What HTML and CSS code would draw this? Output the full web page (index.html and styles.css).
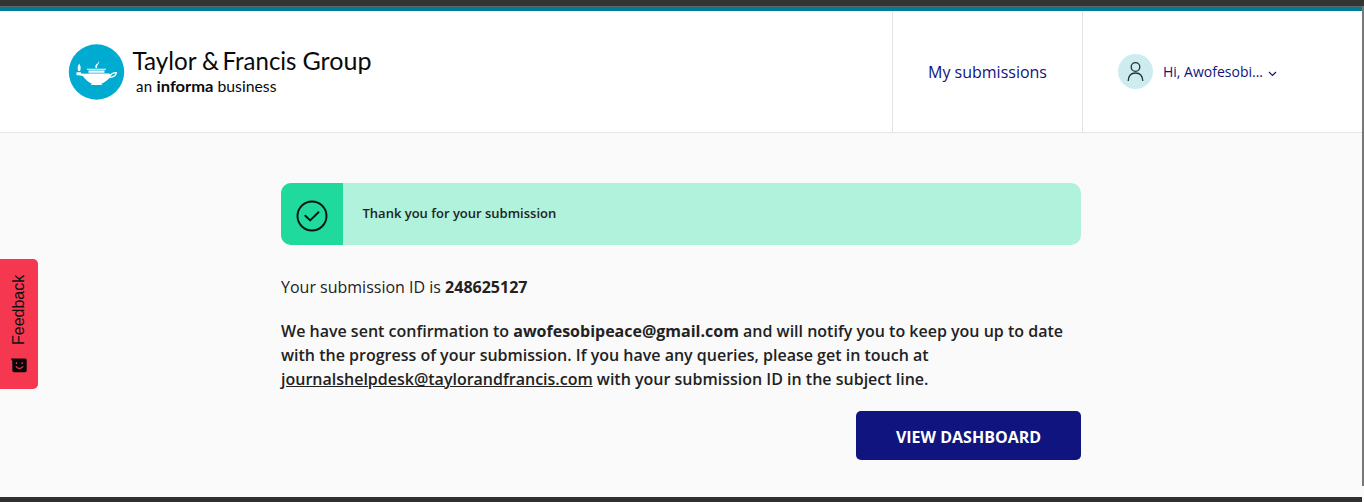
FILE: index.html
```html
<!DOCTYPE html>
<html lang="en">
<head>
<meta charset="utf-8">
<title>Submission received</title>
<link rel="stylesheet" href="styles.css">
</head>
<body>
<div class="window">
  <div class="page">
    <header class="header">
      <a class="brand">
        <svg width="310" height="60" viewBox="0 0 310 60">
          <circle cx="27.500" cy="30" r="27.700" fill="#00abd1"/>
          <g fill="#fff">
            <path d="M7.500 30.300h4.500v1.200l3 .3c8-.4 17-.4 24-.2 1.500 0 2.500.6 3.300 1.500-.5 1.500-1.200 2.400-2.300 3.300-3 3-6 4.800-8 5.300l1.500 1.300H21.500l1.500-1.300c-3.500-1.200-6.500-3.800-9-7.400-1.300-1-3.500-1-6.500-1z"/>
            <path d="M18 26.700h19v1H18zM19.500 28.600h16v2.200h-16z"/>
            <path d="M10.200 21.500c1.900 3.300 1.800 5 .8 7.500H9.300c-1-2.500-1-4.200.9-7.500z"/>
            <path d="M30 19c.8 3-2.600 3.500-1.800 7h-1.500c-1.600-4 2.600-3.600 3.300-7z"/>
          </g>
          <path fill="none" stroke="#fff" stroke-width="1.300" d="M40.500 35.300c4 .2 6.300-1.800 6.900-4.600-2.500-.3-4.700.7-6.400 2.800"/>
          <g class="brand-name">
            <text x="63.500" y="28" textLength="64" lengthAdjust="spacingAndGlyphs">Taylor</text>
            <text x="133" y="28" textLength="17" lengthAdjust="spacingAndGlyphs">&amp;</text>
            <text x="153.500" y="28" textLength="74" lengthAdjust="spacingAndGlyphs">Francis</text>
            <text x="233.500" y="28" textLength="69" lengthAdjust="spacingAndGlyphs">Group</text>
          </g>
          <g class="brand-tag">
            <text x="67" y="50" textLength="16">an</text>
            <text x="87.500" y="50" font-weight="700" textLength="57" lengthAdjust="spacingAndGlyphs">informa</text>
            <text x="148.500" y="50" textLength="59" lengthAdjust="spacingAndGlyphs">business</text>
          </g>
        </svg>
      </a>
      <a class="nav">My submissions</a>
      <div class="user">
        <span class="avatar">
          <svg width="18" height="22" viewBox="0 0 18 22" fill="none" stroke="#20343a" stroke-width="1.300"><circle cx="8.500" cy="6" r="4.300"/><path d="M1.200 20c.2-4.900 3-8 7.300-8s7.100 3.100 7.300 8"/></svg>
        </span>
        <span class="hello">Hi, Awofesobi...</span>
        <svg class="chevron" width="9" height="6" viewBox="0 0 9 6" fill="none" stroke="#10147e" stroke-width="1.200"><path d="M1 1l3.500 3.500L8 1"/></svg>
      </div>
    </header>
    <main class="main">
      <div class="alert">
        <div class="alert-icon">
          <svg width="32" height="32" viewBox="0 0 32 32" fill="none" stroke="#07140f" stroke-width="1.900" stroke-linecap="round" stroke-linejoin="round"><circle cx="16" cy="16" r="14.500"/><path d="M9.300 15.700l4.900 4.700 8.300-8.200"/></svg>
        </div>
        <div class="alert-text">Thank you for your submission</div>
      </div>
      <p class="id-line">Your submission ID is <b>248625127</b></p>
      <p class="message">We have sent confirmation to <b>awofesobipeace@gmail.com</b> and will notify you to keep you up to date<br>with the progress of your submission. If you have any queries, please get in touch at<br><a class="mail">journalshelpdesk@taylorandfrancis.com</a> with your submission ID in the subject line.</p>
      <div class="actions"><button class="button">VIEW DASHBOARD</button></div>
    </main>
  </div>
  <div class="edge"></div>
</div>
<div class="feedback">
  <span class="feedback-label">Feedback</span>
  <svg class="smile" width="16" height="15" viewBox="0 0 16 15"><path d="M0 .3l3 .1h11q1.700 0 1.700 1.700v10.300q0 1.800-1.700 1.800H3q-1.700 0-1.700-1.800V3.500z" fill="#080808"/><path d="M4.800 8.300q3.500 4.300 7.400 0M5.500 4.200v1.700M11.200 4.200v1.700" fill="none" stroke="#f5384f" stroke-width="1.200"/></svg>
</div>
</body>
</html>
```
FILE: styles.css
```css
* { box-sizing: border-box; }
body {
  margin: 0;
  height: 502px;
  overflow: hidden;
  background: #fafafa;
  color: #222;
  font-family: "Open Sans", sans-serif;
  font-size: 16px;
}
b { font-weight: 700; }
.window {
  display: flex;
  height: 502px;
  border-top: 6px solid #343434;
}
.page {
  width: 1362px;
  border-top: 1px solid #59666a;
  border-bottom: 5px solid #303030;
}
.edge { width: 2px; height: 480px; background: #777; }
.header {
  display: flex;
  height: 126px;
  border-top: 4px solid #007b97;
  border-bottom: 1px solid #e5e5e5;
  background: #fff;
}
.brand { width: 892px; padding: 31px 0 0 69px; }
.brand svg { display: block; overflow: visible; }
.brand-name { font: 25px Lato, sans-serif; fill: #0a0a0a; }
.brand-tag { font: 15px Lato, sans-serif; fill: #0a0a0a; }
.nav {
  display: flex;
  align-items: center;
  justify-content: center;
  width: 191px;
  border: solid #e3e3e3;
  border-width: 0 1px;
  color: #10147e;
}
.user {
  display: flex;
  align-items: center;
  padding-left: 35px;
  color: #10147e;
  font-size: 14px;
}
.avatar {
  display: flex;
  align-items: center;
  justify-content: center;
  width: 35px;
  height: 35px;
  margin-right: 10px;
  border-radius: 50%;
  background: #cdecef;
}
.chevron { margin: 4px 0 0 5px; }
.main { width: 800px; margin: 50px 0 0 281px; }
.alert {
  display: flex;
  height: 62px;
  overflow: hidden;
  border-radius: 10px;
  background: #b0f2dc;
}
.alert-icon {
  display: flex;
  align-items: center;
  justify-content: center;
  width: 62px;
  padding-top: 4px;
  background: #1fd99d;
}
.alert-text {
  padding: 18px 0 0 19.500px;
  font-size: 13px;
  font-weight: 600;
  line-height: 24px;
}
.id-line { margin: 30px 0 20px; line-height: 24px; }
.message {
  margin: 0;
  font-weight: 600;
  line-height: 24px;
  white-space: nowrap;
}
.mail { text-decoration: underline; }
.actions { display: flex; justify-content: flex-end; margin-top: 20px; }
.button {
  width: 225px;
  height: 49px;
  padding: 3px 0 0;
  border: 0;
  border-radius: 5px;
  background: #10147e;
  color: #fff;
  font: 700 16px "Open Sans", sans-serif;
}
.feedback {
  position: absolute;
  top: 259px;
  left: 0;
  display: flex;
  flex-direction: column;
  align-items: center;
  width: 38px;
  height: 130px;
  padding-top: 15px;
  border-radius: 0 5px 5px 0;
  background: #f5384f;
}
.feedback-label {
  height: 71px;
  margin-bottom: 13px;
  color: #111;
  font: 16px/20px "Liberation Sans", sans-serif;
  writing-mode: vertical-rl;
  transform: rotate(180deg);
}
.smile { display: block; }
```
